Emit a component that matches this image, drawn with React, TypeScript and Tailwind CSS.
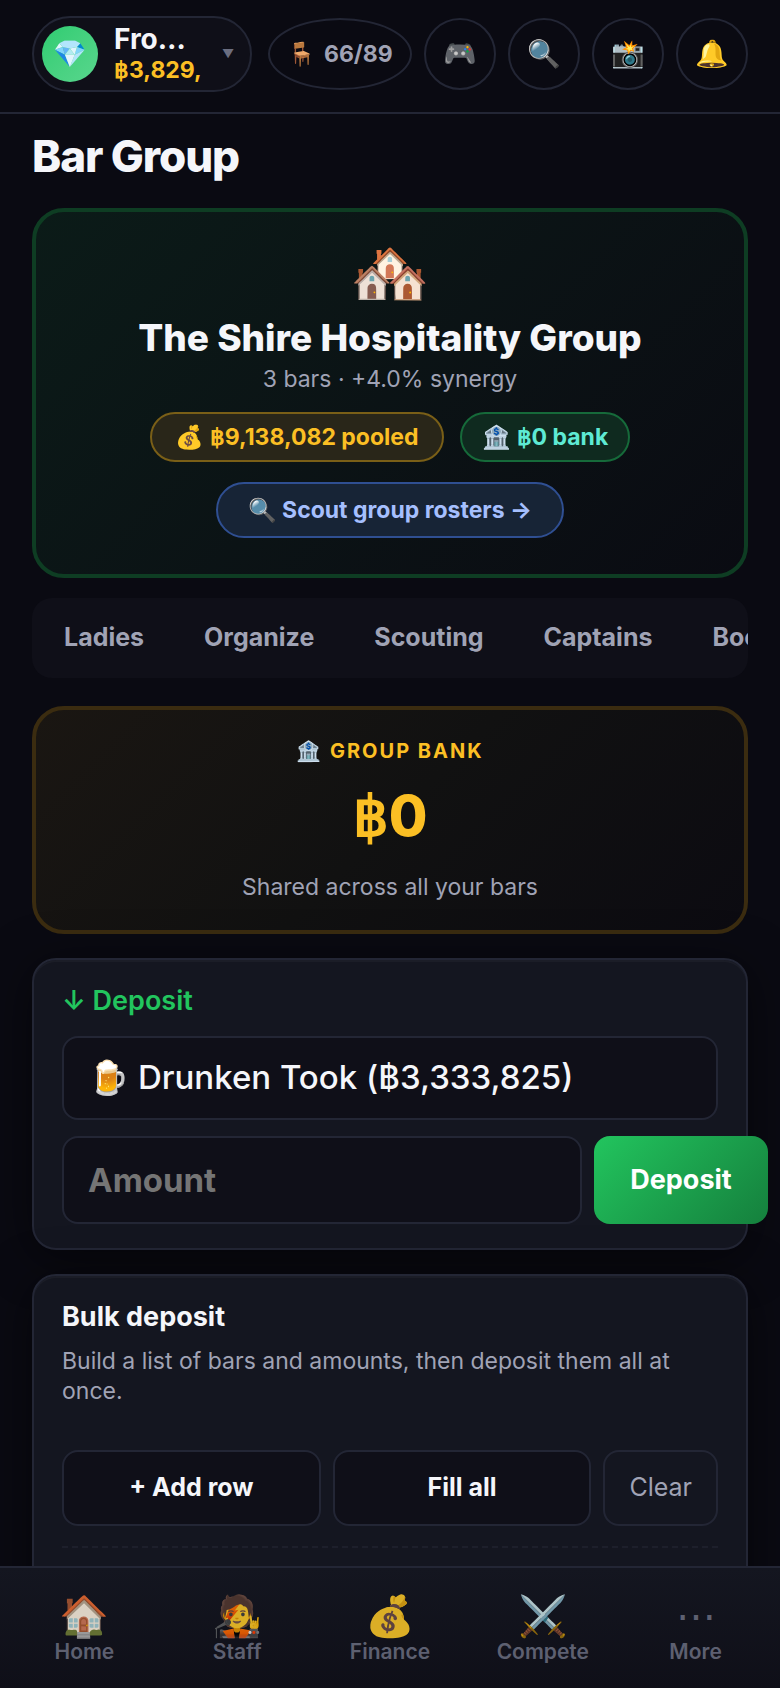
import React, { useState } from 'react';
import clsx from 'clsx';

const TABS = ['Ladies', 'Organize', 'Scouting', 'Captains', 'Book'];

const ACTIONS = [
  { icon: '🎮', label: 'Games' },
  { icon: '🔍', label: 'Search' },
  { icon: '📸', label: 'Snapshot' },
  { icon: '🔔', label: 'Notifications' },
];

const NAV = [
  { icon: '🏠', label: 'Home' },
  { icon: '🧑‍🎤', label: 'Staff' },
  { icon: '💰', label: 'Finance' },
  { icon: '⚔️', label: 'Compete' },
  { icon: '⋯', label: 'More' },
];

const Baht: React.FC<{ value: string }> = ({ value }) => (
  <>
    <span className="font-['Noto_Sans',sans-serif] leading-none">฿</span>
    {value}
  </>
);

const Panel: React.FC<{ title: React.ReactNode; titleClass?: string; children: React.ReactNode }> = ({
  title,
  titleClass,
  children,
}) => (
  <section className="mt-6 rounded-3xl border-2 border-[#232635] bg-[#141620] px-7 pt-6 pb-6 shadow-[0_8px_48px_rgba(0,0,0,0.5),inset_0_2px_0_rgba(255,255,255,0.03)]">
    <h2 className={clsx('text-[27px] leading-[34px]', titleClass)}>{title}</h2>
    {children}
  </section>
);

const Header: React.FC = () => (
  <header className="flex h-[114px] shrink-0 items-start justify-between border-b-2 border-[#232635] px-8 pt-4">
    <button
      type="button"
      className="flex h-[76px] w-[220px] items-center rounded-full border-2 border-[#232635] bg-[#0f0f18] px-2 text-left"
    >
      <span className="flex size-14 shrink-0 items-center justify-center rounded-full bg-linear-to-br from-[#2ecc71] to-[#58d68d] text-[27px]">
        💎
      </span>
      <span className="ml-4 w-[92px] whitespace-nowrap">
        <span className="block text-[28px] leading-8 font-bold">Fro…</span>
        <span className="block text-[23px] leading-[30px] font-bold text-[#fbbf24]">
          <Baht value="3,829," />
        </span>
      </span>
      <span className="ml-4 text-xs text-[#6b6e80]">▼</span>
    </button>
    <div className="mt-[2px] flex gap-3">
      <button
        type="button"
        className="flex h-[72px] w-36 items-center justify-center gap-2 rounded-[50%] border-2 border-[#232635] text-[23px] font-bold text-[#a0a3b5]"
      >
        <span>🪑</span>
        <span>66/89</span>
      </button>
      {ACTIONS.map((a) => (
        <button
          key={a.label}
          type="button"
          aria-label={a.label}
          className="flex size-[72px] items-center justify-center rounded-full border-2 border-[#232635] text-[27px]"
        >
          {a.icon}
        </button>
      ))}
    </div>
  </header>
);

const App: React.FC = () => {
  const [bar, setBar] = useState('drunken-took');
  const [amount, setAmount] = useState('');

  return (
    <div className="flex h-screen flex-col bg-[#0a0a12] font-['Inter','Noto_Color_Emoji',sans-serif] text-[#f5f6fa]">
      <Header />

      <main className="min-h-0 flex-1 overflow-x-hidden overflow-y-auto px-8 [scrollbar-width:none]">
        <h1 className="pt-4 text-[44px] leading-[52px] font-extrabold tracking-tight">Bar Group</h1>

        <section className="mt-[26px] flex flex-col items-center rounded-[32px] border-4 border-[#0e3d23] bg-linear-135 from-[#0b1b18] to-[#0a0b12] px-6 pt-6 pb-9">
          <div className="text-[64px] leading-[72px]">🏘️</div>
          <h2 className="mt-2 text-[37px] leading-[44px] font-extrabold">The Shire Hospitality Group</h2>
          <p className="mt-1 text-[23px] leading-[30px] text-[#a0a3b5]">3 bars · +4.0% synergy</p>
          <div className="mt-[18px] flex gap-4 text-[23px] font-bold">
            <span className="flex h-[50px] items-center rounded-full border-2 border-[#7a5f17] bg-[#292619] px-6 text-[#fbbf24]">
              <span>
                💰 <Baht value="9,138,082 pooled" />
              </span>
            </span>
            <span className="flex h-[50px] items-center rounded-full border-2 border-[#166a3a] bg-[#0f2a1f] px-5 text-[#5eead4]">
              <span>
                🏦 <Baht value="0 bank" />
              </span>
            </span>
          </div>
          <button
            type="button"
            className="mt-5 h-14 rounded-full border-2 border-[#2f4f92] bg-[#172436] px-[30px] text-[23px] font-bold text-[#a5bffe]"
          >
            🔍 Scout group rosters →
          </button>
        </section>

        <div role="tablist" className="mt-5 flex h-20 overflow-hidden rounded-[20px] bg-[#0f0f18] px-0.5">
          {TABS.map((t) => (
            <button
              key={t}
              type="button"
              role="tab"
              className="shrink-0 px-[30px] text-[25px] font-bold text-[#a0a3b5]"
            >
              {t}
            </button>
          ))}
        </div>

        <section className="mt-7 rounded-[32px] border-4 border-[#3b2c10] bg-linear-135 from-[#1a1612] via-[#111111] to-[#0c0b11] py-7 text-center">
          <h2 className="text-xl leading-[26px] font-bold tracking-widest text-[#fbbf24]">🏦 GROUP BANK</h2>
          <div className="mt-4 text-[56px] leading-[72px] font-extrabold text-[#fbbf24]">
            <Baht value="0" />
          </div>
          <p className="mt-5 text-[23px] leading-[30px] text-[#a0a3b5]">Shared across all your bars</p>
        </section>

        <Panel title="↓ Deposit" titleClass="font-semibold text-[#22c55e]">
          <select
            aria-label="Bar"
            value={bar}
            onChange={(e) => setBar(e.target.value)}
            className="mt-[18px] block h-[84px] w-full appearance-none rounded-2xl border-2 border-[#232635] bg-[#0f0f18] px-6 text-[33px] font-medium"
          >
            <option value="drunken-took">🍺 Drunken Took (฿3,333,825)</option>
          </select>
          <div className="mt-4 flex gap-3">
            <input
              aria-label="Amount"
              value={amount}
              onChange={(e) => setAmount(e.target.value)}
              placeholder="Amount"
              className="h-[88px] w-[520px] shrink-0 rounded-2xl border-2 border-[#232635] bg-[#0f0f18] px-6 text-[33px] font-bold placeholder:text-[#757575]"
            />
            <button
              type="button"
              className="h-[88px] w-[174px] shrink-0 rounded-2xl bg-linear-135 from-[#22c55e] to-[#15803d] text-[27px] font-bold text-white"
            >
              Deposit
            </button>
          </div>
        </Panel>

        <Panel title="Bulk deposit" titleClass="font-bold">
          <p className="mt-3 text-[23px] leading-[30px] text-[#a0a3b5]">
            Build a list of bars and amounts, then deposit them all at once.
          </p>
          <div className="mt-11 flex gap-3 text-[25px]">
            <button type="button" className="h-[76px] flex-1 rounded-2xl border-2 border-[#232635] bg-[#0f0f18] font-bold">
              + Add row
            </button>
            <button type="button" className="h-[76px] flex-1 rounded-2xl border-2 border-[#232635] bg-[#0f0f18] font-bold">
              Fill all
            </button>
            <button type="button" className="h-[76px] rounded-2xl border-2 border-[#232635] px-6 text-[#a0a3b5]">
              Clear
            </button>
          </div>
          <div className="mt-5 h-20 border-t-2 border-dashed border-[#1d1f2b]" />
        </Panel>
      </main>

      <nav className="flex h-[122px] shrink-0 border-t-2 border-[#232635] bg-linear-to-b from-[#141620] to-[#0f0f18] px-2 pt-6">
        {NAV.map((n) => (
          <a key={n.label} href="#" className="flex flex-1 flex-col items-center text-[#6b6e80] opacity-85">
            <span className="h-12 text-[40px] leading-[48px]">{n.icon}</span>
            <span className="text-[21px] leading-6 font-semibold">{n.label}</span>
          </a>
        ))}
      </nav>
    </div>
  );
};

export default App;
